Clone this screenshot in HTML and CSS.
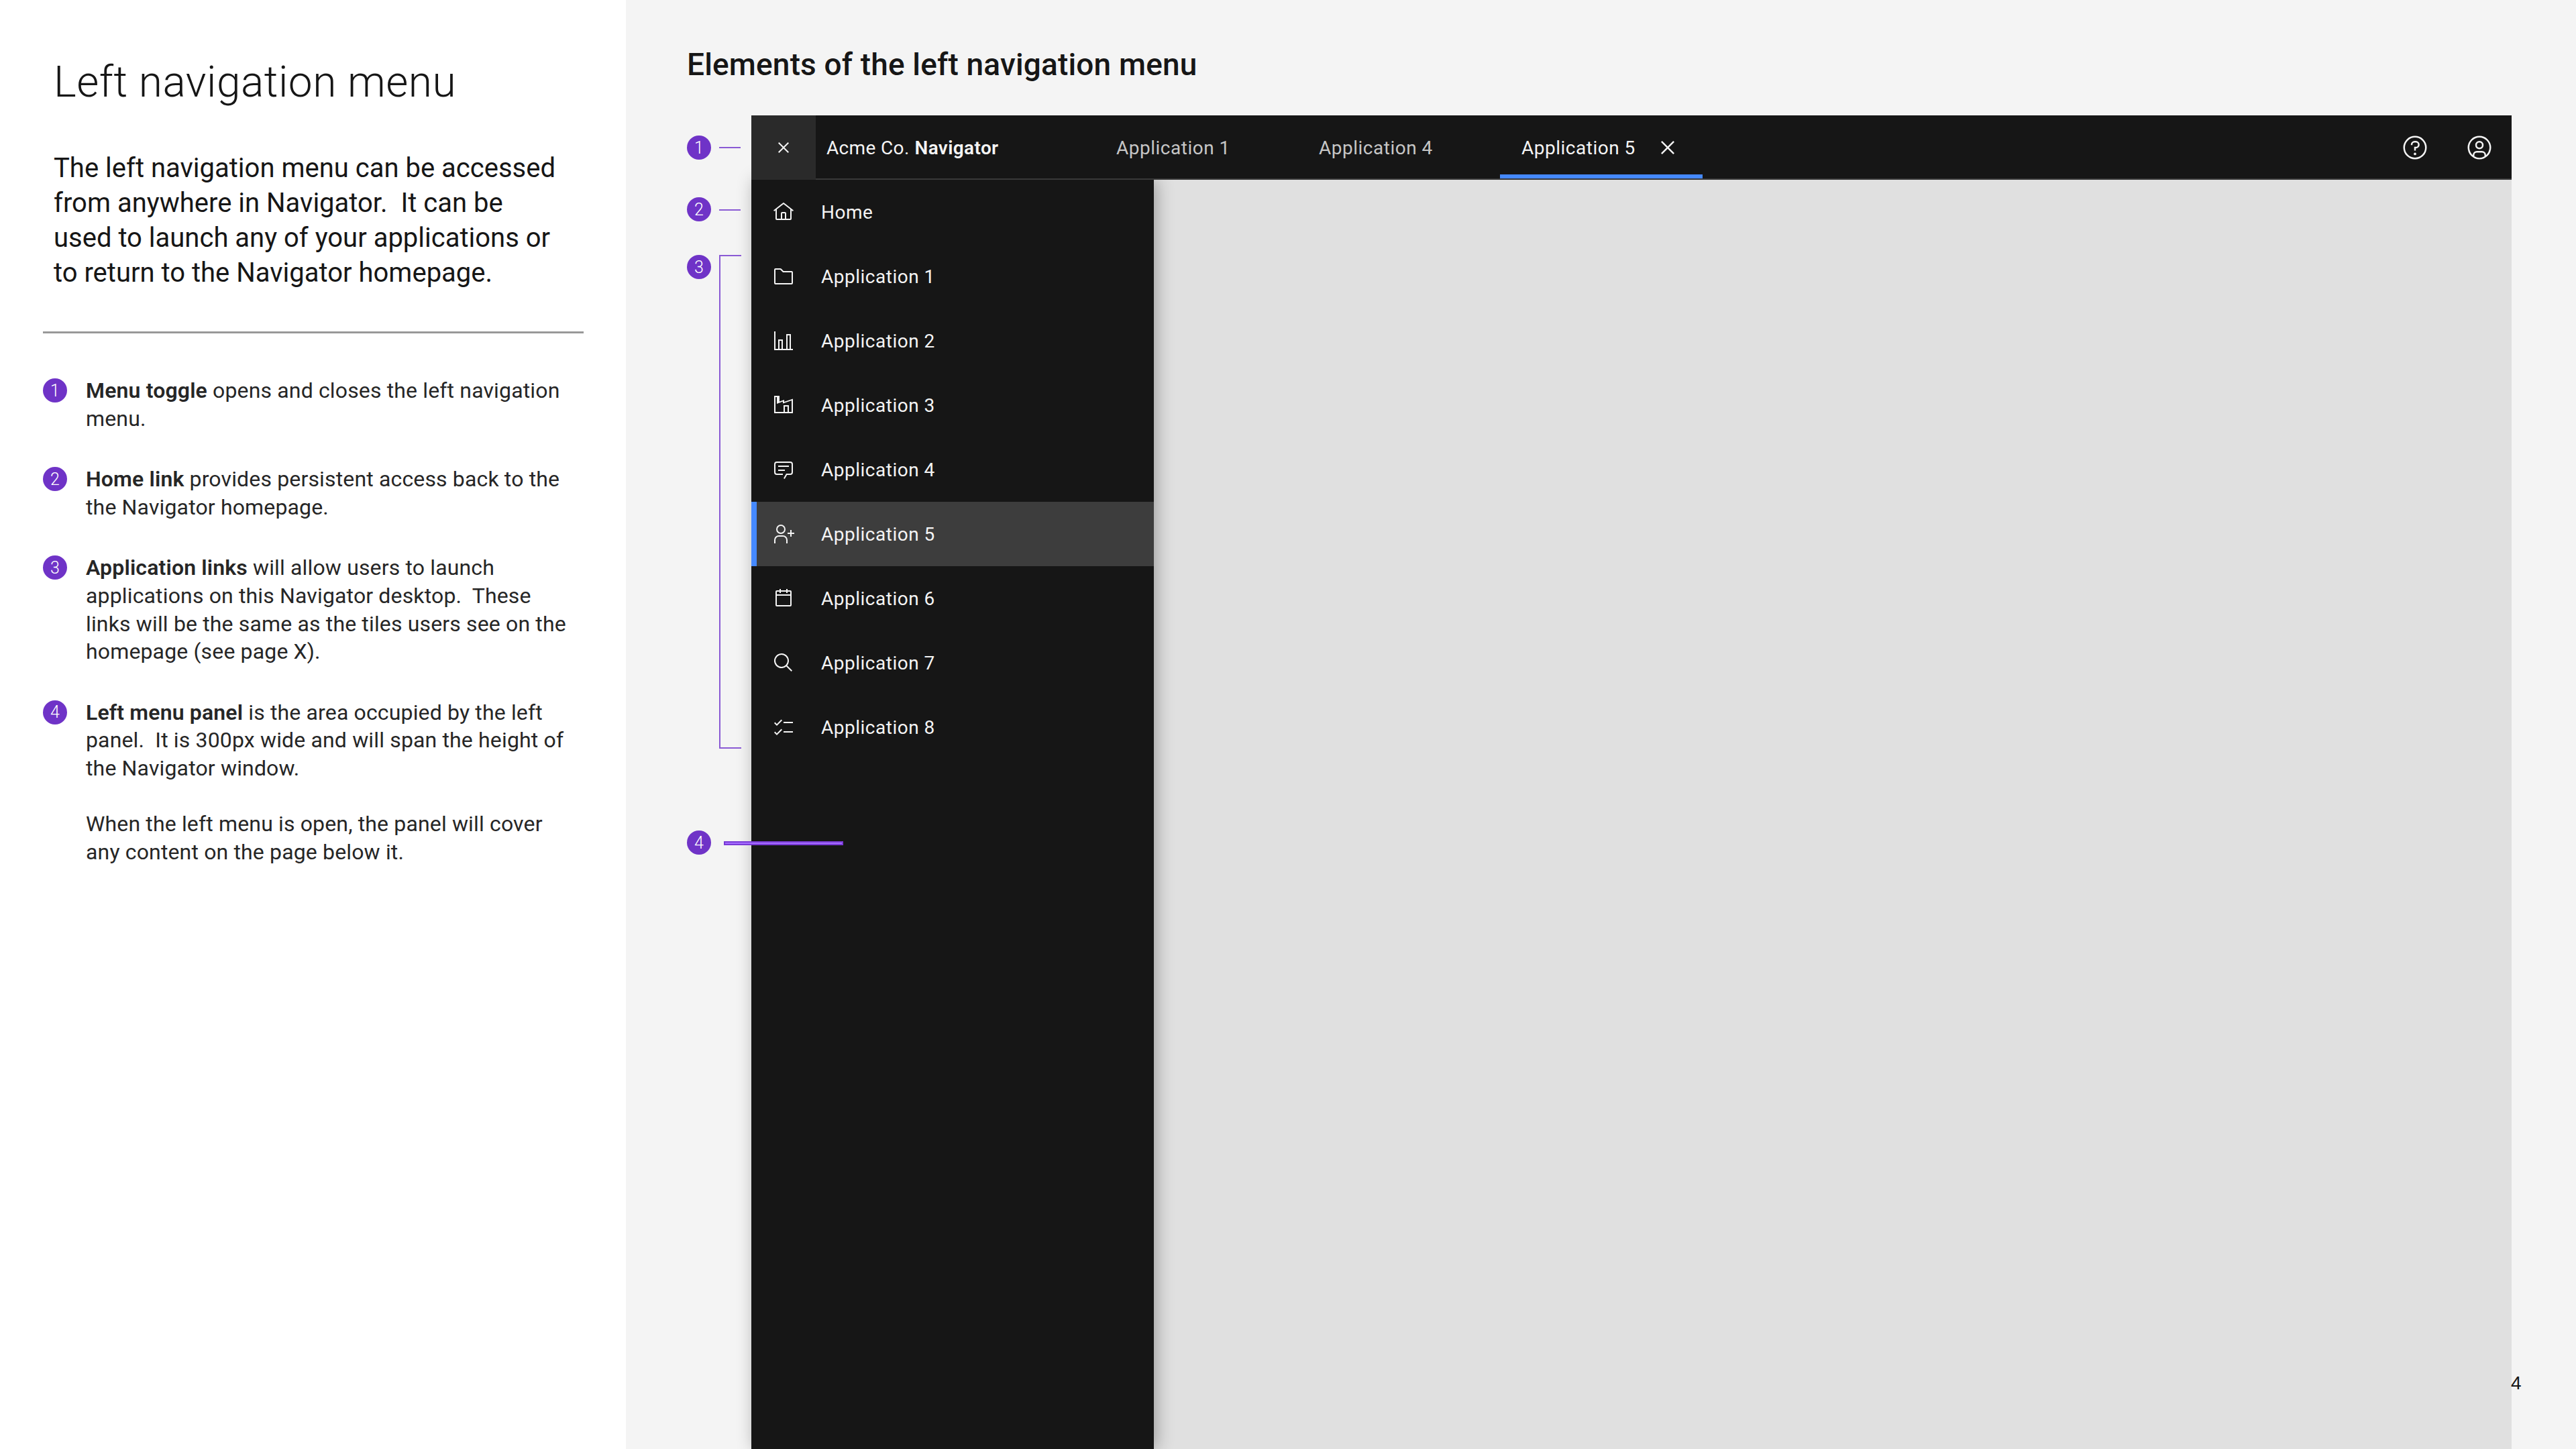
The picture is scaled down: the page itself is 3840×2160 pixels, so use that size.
FILE: index.html
```html
<!DOCTYPE html>
<html lang="en">
<head>
<meta charset="utf-8">
<title>Left navigation menu</title>
<link rel="stylesheet" href="styles.css">
</head>
<body>
<div class="page">
  <aside class="intro">
    <h1 class="intro-title">Left navigation menu</h1>
    <p class="intro-lead">The left navigation menu can be accessed<br>from anywhere in Navigator.&nbsp; It can be<br>used to launch any of your applications or<br>to return to the Navigator homepage.</p>
    <hr class="intro-rule">
    <ol class="notes">
      <li class="note"><span class="badge">1</span><p class="note-text"><b>Menu toggle</b> opens and closes the left navigation<br>menu.</p></li>
      <li class="note"><span class="badge">2</span><p class="note-text"><b>Home link</b> provides persistent access back to the<br>the Navigator homepage.</p></li>
      <li class="note"><span class="badge">3</span><p class="note-text"><b>Application links</b> will allow users to launch<br>applications on this Navigator desktop.&nbsp; These<br>links will be the same as the tiles users see on the<br>homepage (see page X).</p></li>
      <li class="note"><span class="badge">4</span><p class="note-text"><b>Left menu panel</b> is the area occupied by the left<br>panel.&nbsp; It is 300px wide and will span the height of<br>the Navigator window.<br><br>When the left menu is open, the panel will cover<br>any content on the page below it.</p></li>
    </ol>
  </aside>
  <main class="canvas">
    <h2 class="canvas-title">Elements of the left navigation menu</h2>
    <section class="stage">
      <span class="badge mark mark-1">1</span><i class="tick tick-1"></i>
      <span class="badge mark mark-2">2</span><i class="tick tick-2"></i>
      <span class="badge mark mark-3">3</span><i class="bracket"></i>
      <span class="badge mark mark-4">4</span><i class="panel-line"></i>
      <div class="app">
        <header class="topbar">
          <div class="toggle"><svg class="icon" viewBox="0 0 32 32"><path d="M24 9.4 22.6 8 16 14.6 9.4 8 8 9.4 14.6 16 8 22.6 9.4 24 16 17.4 22.6 24 24 22.6 17.4 16z"/></svg></div>
          <div class="brand">Acme Co. <b>Navigator</b></div>
          <div class="tab">Application 1</div>
          <div class="tab">Application 4</div>
          <div class="tab tab-active">Application 5<svg class="icon-lg tab-close" viewBox="0 0 32 32"><path d="M24 9.4 22.6 8 16 14.6 9.4 8 8 9.4 14.6 16 8 22.6 9.4 24 16 17.4 22.6 24 24 22.6 17.4 16z"/></svg></div>
          <div class="actions">
            <div class="action"><svg class="icon-lg" viewBox="0 0 32 32"><path d="M16 2a14 14 0 1 0 14 14A14 14 0 0 0 16 2Zm0 26a12 12 0 1 1 12-12 12 12 0 0 1-12 12Z"/><circle cx="16" cy="23.5" r="1.5"/><path d="M17 8h-1.5a4.49 4.49 0 0 0-4.5 4.5v.5h2v-.5a2.5 2.5 0 0 1 2.5-2.5H17a2.5 2.5 0 0 1 0 5h-2v4.5h2V17a4.5 4.5 0 0 0 0-9Z"/></svg></div>
            <div class="action"><svg class="icon-lg" viewBox="0 0 32 32"><path d="M16 8a5 5 0 1 0 5 5 5 5 0 0 0-5-5Zm0 8a3 3 0 1 1 3-3 3 3 0 0 1-3 3Z"/><path d="M16 2a14 14 0 1 0 14 14A14.016 14.016 0 0 0 16 2Zm-6 24.377V25a3.003 3.003 0 0 1 3-3h6a3.003 3.003 0 0 1 3 3v1.377a11.899 11.899 0 0 1-12 0Zm13.993-1.451A5.002 5.002 0 0 0 19 20h-6a5.002 5.002 0 0 0-4.993 4.926 12 12 0 1 1 15.985 0Z"/></svg></div>
          </div>
        </header>
        <div class="workspace">
          <nav class="menu">
            <a class="row"><svg class="icon" viewBox="0 0 32 32"><path d="M16.612 2.214a1.01 1.01 0 0 0-1.243 0L1 13.419l1.243 1.572L4 13.621V26a2.004 2.004 0 0 0 2 2h20a2.004 2.004 0 0 0 2-2V13.63L29.757 15 31 13.428ZM18 26h-4v-8h4Zm2 0v-8a2.002 2.002 0 0 0-2-2h-4a2.002 2.002 0 0 0-2 2v8H6V12.062l10-7.79 10 7.8V26Z"/></svg>Home</a>
            <a class="row"><svg class="icon" viewBox="0 0 32 32"><path d="M11.17 6l3.42 3.41.58.59H28v16H4V6h7.17m0-2H4a2 2 0 0 0-2 2v20a2 2 0 0 0 2 2h24a2 2 0 0 0 2-2V10a2 2 0 0 0-2-2H16l-3.41-3.41A2 2 0 0 0 11.17 4Z"/></svg>Application 1</a>
            <a class="row"><svg class="icon" viewBox="0 0 32 32"><path d="M4 2H2v28h28v-2H4z"/><path d="M8 14h7v14h-2V16h-3v12H8zM20 6h7v22h-2V8h-3v20h-2z"/></svg>Application 2</a>
            <a class="row"><svg class="icon" viewBox="0 0 32 32"><path fill-rule="evenodd" d="M2 2h8v8.600l7-2.600v3l13-4.600V28H2Zm2 2v22h12V16h8v10h4V9l-13 4.600v-3l-9 3.400V4Zm14 14v8h4v-8Z"/></svg>Application 3</a>
            <a class="row"><svg class="icon" viewBox="0 0 32 32"><path d="M17.74 30 16 29l4-7h6a2 2 0 0 0 2-2V8a2 2 0 0 0-2-2H6a2 2 0 0 0-2 2v12a2 2 0 0 0 2 2h9v2H6a4 4 0 0 1-4-4V8a4 4 0 0 1 4-4h20a4 4 0 0 1 4 4v12a4 4 0 0 1-4 4h-4.840Z"/><path d="M8 10h16v2H8zM8 16h10v2H8z"/></svg>Application 4</a>
            <a class="row row-active"><svg class="icon" viewBox="0 0 32 32"><path d="M32 14h-4v-4h-2v4h-4v2h4v4h2v-4h4z"/><path d="M12 4a5 5 0 1 1-5 5 5 5 0 0 1 5-5m0-2a7 7 0 1 0 7 7 7 7 0 0 0-7-7Z"/><path d="M22 30h-2v-5a5 5 0 0 0-5-5H9a5 5 0 0 0-5 5v5H2v-5a7 7 0 0 1 7-7h6a7 7 0 0 1 7 7Z"/></svg>Application 5</a>
            <a class="row"><svg class="icon" viewBox="0 0 32 32"><path d="M26 4h-4V2h-2v2h-8V2h-2v2H6a2 2 0 0 0-2 2v20a2 2 0 0 0 2 2h20a2 2 0 0 0 2-2V6a2 2 0 0 0-2-2Zm0 22H6V12h20Zm0-16H6V6h4v2h2V6h8v2h2V6h4Z"/></svg>Application 6</a>
            <a class="row"><svg class="icon" viewBox="0 0 32 32"><path d="m29 27.586-7.552-7.552a11.018 11.018 0 1 0-1.414 1.414L27.586 29ZM4 13a9 9 0 1 1 9 9 9.010 9.010 0 0 1-9-9Z"/></svg>Application 7</a>
            <a class="row"><svg class="icon" viewBox="0 0 32 32"><path d="M16 8h14v2H16zM16 22h14v2H16zM6 11.180 3.410 8.590 2 10l4 4 8-8-1.410-1.410zM6 25.180l-2.590-2.590L2 24l4 4 8-8-1.410-1.410z"/></svg>Application 8</a>
          </nav>
          <div class="content"></div>
        </div>
      </div>
    </section>
    <span class="page-number">4</span>
  </main>
</div>
</body>
</html>
```

FILE: styles.css
```css
* { box-sizing: border-box; }
html, body { margin: 0; padding: 0; }
body { font-family: Roboto, "Liberation Sans", sans-serif; color: #161616; background: #f4f4f4; }
.page { display: grid; grid-template-columns: 933px 1fr; height: 2160px; overflow: hidden; }

.intro { background: #fff; padding: 83px 63px 0 64px; }
.intro-title { margin: 0 0 62px 16px; font-size: 64px; line-height: 80px; font-weight: 300; letter-spacing: .5px; white-space: nowrap; }
.intro-lead { margin: 0 0 0 16px; font-size: 40px; line-height: 52px; font-weight: 400; white-space: nowrap; }
.intro-rule { margin: 61px 0 0; height: 3px; border: 0; background: #999; }
.notes { list-style: none; margin: 65px 0 0; padding: 0; display: flex; flex-direction: column; gap: 49px; }
.note { display: flex; gap: 28px; align-items: flex-start; }
.note-text { margin: 0; font-size: 32px; line-height: 41.600px; font-weight: 400; letter-spacing: .15px; color: #262626; white-space: nowrap; }
.note-text b { font-weight: 600; }
.badge { flex: none; display: flex; align-items: center; justify-content: center; width: 36px; height: 36px; border-radius: 50%; background: #6f33c7; color: #fff; font-size: 25px; font-weight: 300; margin-top: 2px; }

.canvas { position: relative; padding: 66px 0 0 91px; }
.canvas-title { margin: 0 0 46px; font-size: 46px; line-height: 60px; font-weight: 500; letter-spacing: .16px; white-space: nowrap; }
.stage { position: relative; padding-left: 96px; }
.app { width: 2624px; }

.mark { position: absolute; left: 0; margin: 0; z-index: 3; }
.mark-1 { top: 30px; }
.mark-2 { top: 122px; }
.mark-3 { top: 208px; }
.mark-4 { top: 1066px; }
.tick { position: absolute; left: 48px; width: 32px; height: 2px; background: #8a5ad4; z-index: 3; }
.tick-1 { top: 47px; }
.tick-2 { top: 140px; }
.bracket { position: absolute; left: 48px; top: 208px; width: 33px; height: 736px; border: 2px solid #8a5ad4; border-right: 0; z-index: 3; }
.panel-line { position: absolute; left: 55px; top: 1082px; width: 178px; height: 6px; background: #a56eff; border: 2px solid #7a3ad6; z-index: 3; }

.topbar { position: relative; z-index: 2; display: flex; height: 96px; background: #161616; border-bottom: 2px solid #393939; color: #f4f4f4; font-size: 28px; }
.toggle { flex: none; width: 96px; height: 96px; display: flex; align-items: center; justify-content: center; background: #2a2a2a; }
.brand { flex: none; width: 416px; padding: 2px 0 0 16px; display: flex; align-items: center; gap: .28em; letter-spacing: .35px; }
.brand b { font-weight: 600; }
.tab { flex: none; width: 302px; height: 94px; padding: 2px 0 0 32px; display: flex; align-items: center; color: #c6c6c6; letter-spacing: .5px; }
.tab-active { color: #f4f4f4; box-shadow: inset 0 -6px 0 #4589ff; }
.tab-close { margin-left: auto; margin-right: 32px; }
.actions { margin-left: auto; display: flex; }
.action { width: 96px; height: 94px; display: flex; align-items: center; justify-content: center; padding-top: 2px; }
.icon { flex: none; width: 32px; height: 32px; fill: #f4f4f4; }
.icon-lg { flex: none; width: 40px; height: 40px; fill: #f4f4f4; }

.workspace { display: flex; height: 1892px; }
.menu { position: relative; z-index: 1; flex: none; width: 600px; background: #161616; box-shadow: 4px 0 24px rgba(0, 0, 0, .3); }
.row { display: flex; align-items: center; gap: 40px; height: 96px; padding-left: 32px; color: #f4f4f4; font-size: 28px; letter-spacing: .5px; }
.row-active { background: #3d3d3d; box-shadow: inset 8px 0 0 #4589ff; }
.content { flex: 1; background: #e0e0e0; }

.page-number { position: absolute; left: 2810px; top: 2046px; font-family: "Liberation Sans", sans-serif; font-size: 28px; line-height: 32px; color: #161616; }
```
